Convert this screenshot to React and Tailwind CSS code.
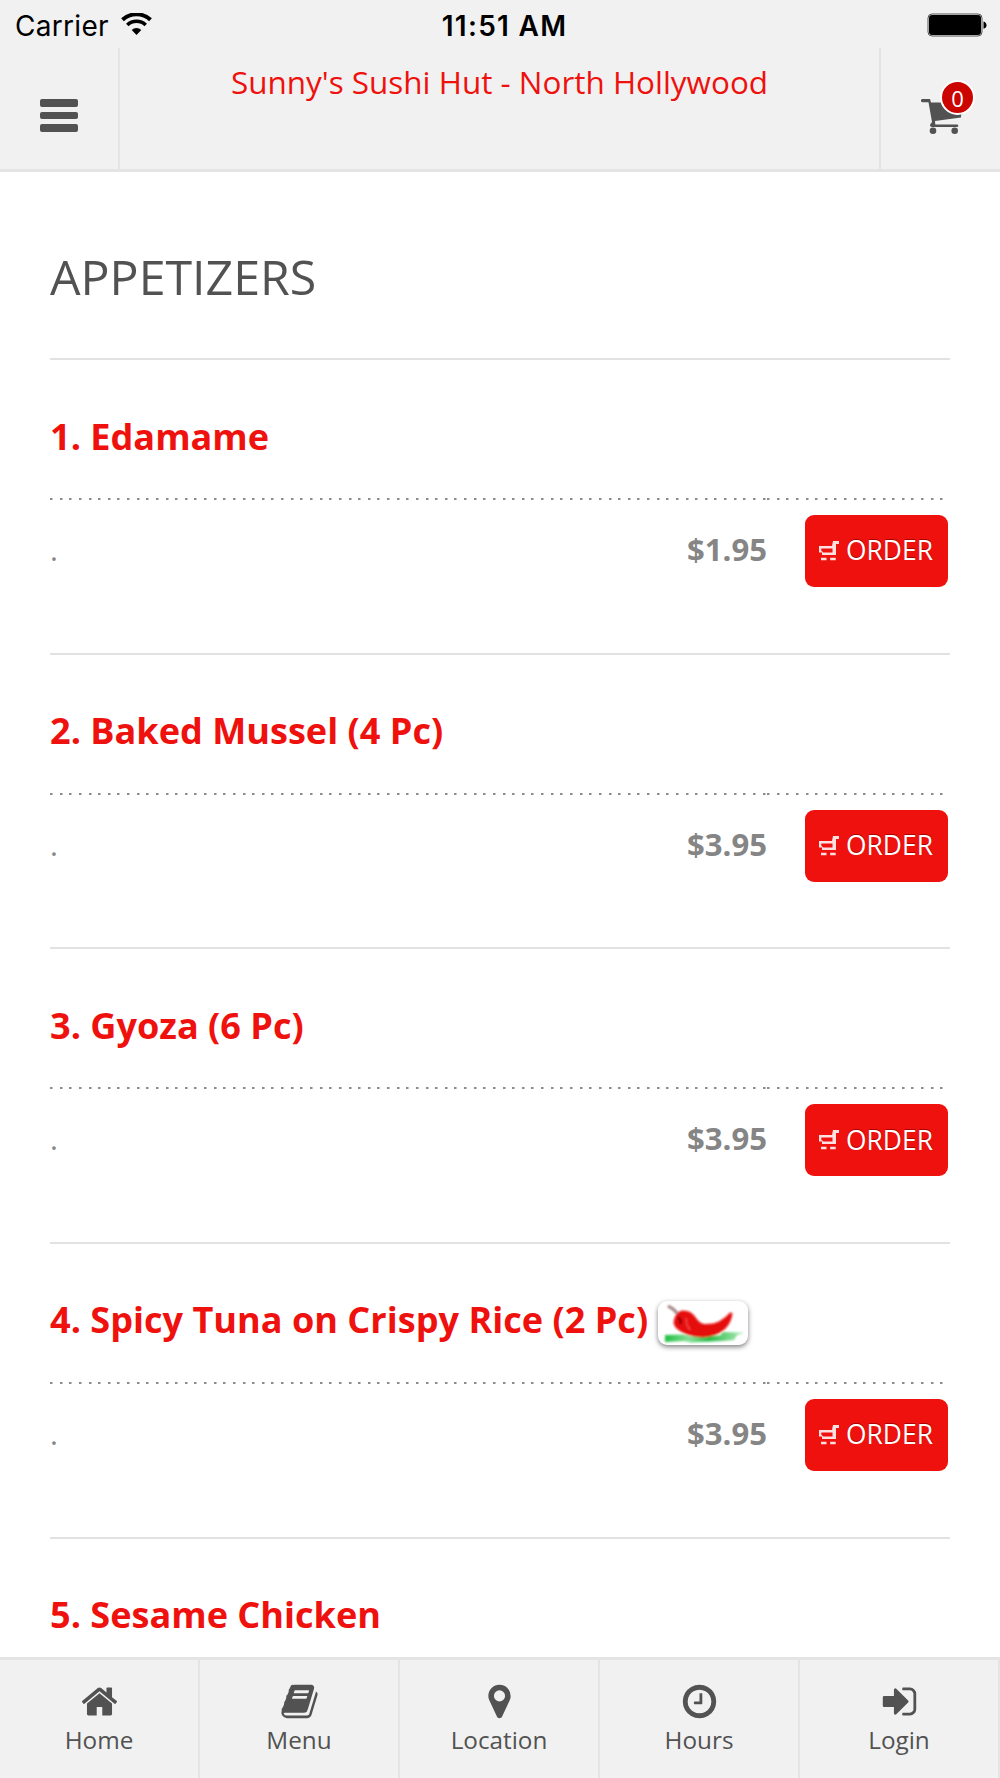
import React from 'react';

const items = [
  { id: 1, name: 'Edamame', price: '1.95' },
  { id: 2, name: 'Baked Mussel (4 Pc)', price: '3.95' },
  { id: 3, name: 'Gyoza (6 Pc)', price: '3.95' },
  { id: 4, name: 'Spicy Tuna on Crispy Rice (2 Pc)', price: '3.95', spicy: true },
  { id: 5, name: 'Sesame Chicken' },
];

const tabs = [
  {
    label: 'Home',
    path: 'M1472 992v480q0 26-19 45t-45 19h-384v-384h-256v384h-384q-26 0-45-19t-19-45v-480q0-1 .5-3t.5-3l575-474 575 474q1 2 1 6zm223-69l-62 74q-8 9-21 11h-3q-13 0-21-7l-692-577-692 577q-12 8-24 7-13-2-21-11l-62-74q-8-10-7-23.5t11-21.5l719-599q32-26 76-26t76 26l244 204v-195q0-14 9-23t23-9h192q14 0 23 9t9 23v408l219 182q10 8 11 21.5t-7 23.5z',
  },
  {
    label: 'Menu',
    path: 'M1703 478q40 57 18 129l-275 906q-19 64-76.5 107.5t-122.5 43.5h-923q-77 0-148.5-53.5t-99.5-131.5q-24-67-2-127 0-4 3-27t4-37q1-8-3-21.5t-3-19.5q2-11 8-21t16.5-23.5 16.5-23.5q23-38 45-91.5t30-91.5q3-10 .5-30t-.5-28q3-11 17-28t17-23q21-36 42-92t25-90q1-9-2.5-32t.5-28q4-13 22-30.5t22-22.5q19-26 42.5-84.5t27.5-96.5q1-8-3-25.5t-2-26.5q2-8 9-18t18-23 17-21q8-12 16.5-30.5t15-35 16-36 19.5-32 26.5-23.5 36-11.5 47.5 5.5l-1 3q38-9 51-9h761q74 0 114 56t18 130l-274 906q-36 119-71.5 153.5t-128.5 34.5h-869q-27 0-38 15-11 16-1 43 24 70 144 70h923q29 0 56-15.5t35-41.5l300-987q7-22 5-57 38 15 59 43zm-1064 2q-4 13 2 22.5t20 9.5h608q13 0 25.5-9.5t16.5-22.5l21-64q4-13-2-22.5t-20-9.5h-608q-13 0-25.5 9.5t-16.5 22.5zm-83 256q-4 13 2 22.5t20 9.5h608q13 0 25.5-9.5t16.5-22.5l21-64q4-13-2-22.5t-20-9.5h-608q-13 0-25.5 9.5t-16.5 22.5z',
  },
  {
    label: 'Location',
    path: 'M1152 640q0-106-75-181t-181-75-181 75-75 181 75 181 181 75 181-75 75-181zm256 0q0 109-33 179l-364 774q-16 33-47.5 52t-67.5 19-67.5-19-46.5-52l-365-774q-33-70-33-179 0-212 150-362t362-150 362 150 150 362z',
  },
  {
    label: 'Hours',
    path: 'M1024 544v448q0 14-9 23t-23 9h-320q-14 0-23-9t-9-23v-64q0-14 9-23t23-9h224v-352q0-14 9-23t23-9h64q14 0 23 9t9 23zm416 352q0-148-73-273t-198-198-273-73-273 73-198 198-73 273 73 273 198 198 273 73 273-73 198-198 73-273zm224 0q0 209-103 385.5t-279.5 279.5-385.5 103-385.5-103-279.5-279.5-103-385.5 103-385.5 279.5-279.5 385.5-103 385.5 103 279.5 279.5 103 385.5z',
  },
  {
    label: 'Login',
    path: 'M1312 896q0 26-19 45l-544 544q-19 19-45 19t-45-19-19-45v-288h-448q-26 0-45-19t-19-45v-384q0-26 19-45t45-19h448v-288q0-26 19-45t45-19 45 19l544 544q19 19 19 45zm352-352v704q0 119-84.5 203.5t-203.5 84.5h-320q-13 0-22.5-9.5t-9.5-22.5q0-4-1-20t-.5-26.5 3-23.5 10-19.5 20.5-6.5h320q66 0 113-47t47-113v-704q0-66-47-113t-113-47h-312l-11.5-1-11.5-3-8-5.5-7-9-2-13.5q0-4-1-20t-.5-26.5 3-23.5 10-19.5 20.5-6.5h320q119 0 203.5 84.5t84.5 203.5z',
  },
];

function StatusBar() {
  return (
    <div className="flex h-12 shrink-0 items-center justify-between pl-[15px] pr-[13px] font-['Inter','Liberation_Sans',sans-serif] text-black">
      <div className="flex w-[300px] items-center gap-[12px] pt-[3px]">
        <span className="text-[28px] leading-8 tracking-[0.3px]">Carrier</span>
        <svg width="31" height="22" viewBox="0 0 31 22" className="-mt-1">
          <path d="M1.500 6.800a20.500 20.500 0 0 1 28 0" fill="none" stroke="black" strokeWidth="4" />
          <path d="M6.300 12a13.300 13.300 0 0 1 18.400 0" fill="none" stroke="black" strokeWidth="3.600" />
          <path d="M10.700 17a6.800 6.800 0 0 1 9.600 0L15.500 22z" />
        </svg>
      </div>
      <span className="pl-[7px] pt-[3px] text-[28px] font-semibold leading-8 tracking-[1.300px]">11:51 AM</span>
      <div className="flex w-[300px] justify-end pt-0.5">
        <svg width="60" height="24" viewBox="0 0 60 24">
          <rect x="1" y="1" width="54" height="22" rx="4" fill="none" stroke="#555" strokeWidth="1" />
          <rect x="2" y="2" width="52" height="20" rx="3" />
          <path d="M56.500 8.500q3 1 3 3.700t-3 3.600z" />
        </svg>
      </div>
    </div>
  );
}

function Header() {
  return (
    <header className="flex h-[124px] shrink-0 border-b-[3px] border-[#e4e4e4]">
      <button className="flex w-[120px] shrink-0 flex-col gap-[5px] border-r-2 border-[#e4e4e4] pl-10 pt-[51px]">
        <span className="h-[7.5px] w-[38px] rounded-[2px] bg-[#525252]" />
        <span className="h-[7.5px] w-[38px] rounded-[2px] bg-[#525252]" />
        <span className="h-[7.5px] w-[38px] rounded-[2px] bg-[#525252]" />
      </button>
      <h1 className="flex-1 pt-[12px] text-center text-[31.45px] leading-[44px] text-[#ee110d]">
        Sunny's Sushi Hut - North Hollywood
      </h1>
      <button className="relative flex w-[121px] shrink-0 items-start border-l-2 border-[#e4e4e4] pl-10 pt-[51px]">
        <svg width="42" height="36" viewBox="0 0 42 36" fill="#525252">
          <path d="M1.500 0H9l1 3.500h31L40 18.500 14 22l.3 3.500H36a1.300 1.300 0 0 1 0 2.600H11q-3-.5-1.500-3l1.500-2L7.500 3.200h-6a1.600 1.600 0 0 1 0-3.200z" />
          <circle cx="12" cy="31.700" r="3.300" />
          <circle cx="33.700" cy="31.700" r="3.300" />
        </svg>
        <span className="absolute left-[59px] top-[32px] flex size-[35px] items-center justify-center rounded-full border-2 border-white bg-[#cc0400] text-[22px] leading-none text-white">
          0
        </span>
      </button>
    </header>
  );
}

function Chili() {
  return (
    <span className="mt-[8px] flex h-[44px] w-[90px] rounded-[9px] bg-white shadow-[0_2px_5px_rgba(0,0,0,0.5)]">
      <svg width="90" height="44" viewBox="0 0 90 44">
        <defs>
          <linearGradient id="grass" x1="0" x2="1">
            <stop offset="0" stopColor="#1fbf3f" />
            <stop offset="0.3" stopColor="#86e096" />
            <stop offset="0.55" stopColor="#28bd48" />
            <stop offset="1" stopColor="#b4ecbd" />
          </linearGradient>
          <filter id="soft" x="-10%" y="-10%" width="120%" height="120%">
            <feGaussianBlur stdDeviation="0.8" />
          </filter>
        </defs>
        <g filter="url(#soft)">
          <path d="M7 34l18-.5 9 2 28-1 3-3.500 22 .8-8 2.200-3 5-12 1-31 1.500-7-1.500-19 1z" fill="url(#grass)" />
          <path d="M10 5l5 3 6 6" fill="none" stroke="#a08080" strokeWidth="3" />
          <path d="M16 19q2-9 9-9.500 8 0 12 6 4 6.500 9 7.500 9 .5 15-2.500 7-4 11-9l2.500.5q-1 10-8 16.500-9 7.500-22 8-16-.5-26-9-4-4-2.500-8.500z" fill="#e60808" />
          <path d="M20 16l3 4-1 3" fill="none" stroke="#7a0000" strokeWidth="2" />
          <path d="M28 17l1 7 3 5" fill="none" stroke="#f04a4a" strokeWidth="1.500" />
        </g>
      </svg>
    </span>
  );
}

function OrderButton() {
  return (
    <button className="mr-[2px] flex h-[72px] w-[143px] items-center rounded-[9px] bg-[#ee110d] pl-[14px] text-[26.400px] text-white [text-shadow:0_-1.500px_0_#a00]">
      <svg width="20" height="20" viewBox="0 0 20 20" className="mr-[7px]" fill="#fde0df">
        <path d="M0 5h13l1-5h6v3h-3v11H3v-2.500H0zM2.300 7.500v2.200l2 1.800h9.200v-4z" fillRule="evenodd" />
        <path d="M2 16.700h5.500v2.600H2zM11.200 16.700h5.500v2.600h-5.500z" />
      </svg>
      ORDER
    </button>
  );
}

function DottedLine() {
  return (
    <div className="flex h-[2px] shrink-0">
      <div className="w-[717px] bg-[repeating-linear-gradient(90deg,#8c8c8c_0_2px,#c4c4c4_2px_3px,transparent_3px_9.630px)]" />
      <div className="flex-1 bg-[repeating-linear-gradient(90deg,#8c8c8c_0_2px,#c4c4c4_2px_3px,transparent_3px_9.630px)]" />
    </div>
  );
}

function MenuItem({ item }) {
  return (
    <li className="flex shrink-0 flex-col border-t-2 border-[#e2e2e2]">
      <div className="flex h-[138px] shrink-0 items-center gap-[10px] pt-[13px]">
        <h3 className="text-[36.100px] font-bold leading-[50px] text-[#ee110d]">
          {item.id}. {item.name}
        </h3>
        {item.spicy && <Chili />}
      </div>
      {item.price && (
        <>
          <DottedLine />
          <div className="flex h-[152.660px] items-start pt-[15px] text-[#858585]">
            <p className="flex-1 pt-[15px] text-[30px] leading-10">.</p>
            <p className="mr-[38px] text-[31.100px] font-bold leading-[68px]">${item.price}</p>
            <OrderButton />
          </div>
        </>
      )}
    </li>
  );
}

function TabBar() {
  return (
    <nav className="flex h-[121px] shrink-0 border-t-[3px] border-[#e4e4e4] bg-[#f1f1f1] text-[#525252]">
      {tabs.map((tab) => (
        <a
          key={tab.label}
          className="flex flex-1 flex-col items-center border-r-2 border-[#e4e4e4] pt-[22px]"
        >
          <svg width="39" height="39" viewBox="0 0 1792 1792" fill="currentColor">
            <path d={tab.path} />
          </svg>
          <span className="text-[24.300px] leading-[37px]">{tab.label}</span>
        </a>
      ))}
    </nav>
  );
}

export default function App() {
  return (
    <div className="flex h-[1778px] w-[1000px] flex-col overflow-hidden bg-white font-['Open_Sans','Noto_Sans',sans-serif]">
      <div className="flex shrink-0 flex-col bg-[#f1f1f1]">
        <StatusBar />
        <Header />
      </div>
      <main className="min-h-0 flex-1 overflow-hidden px-[50px]">
        <h2 className="h-[186px] pt-[69px] text-[48.300px] leading-[70px] text-[#525252]">APPETIZERS</h2>
        <ul className="flex flex-col">
          {items.map((item) => (
            <MenuItem key={item.id} item={item} />
          ))}
        </ul>
      </main>
      <TabBar />
    </div>
  );
}
